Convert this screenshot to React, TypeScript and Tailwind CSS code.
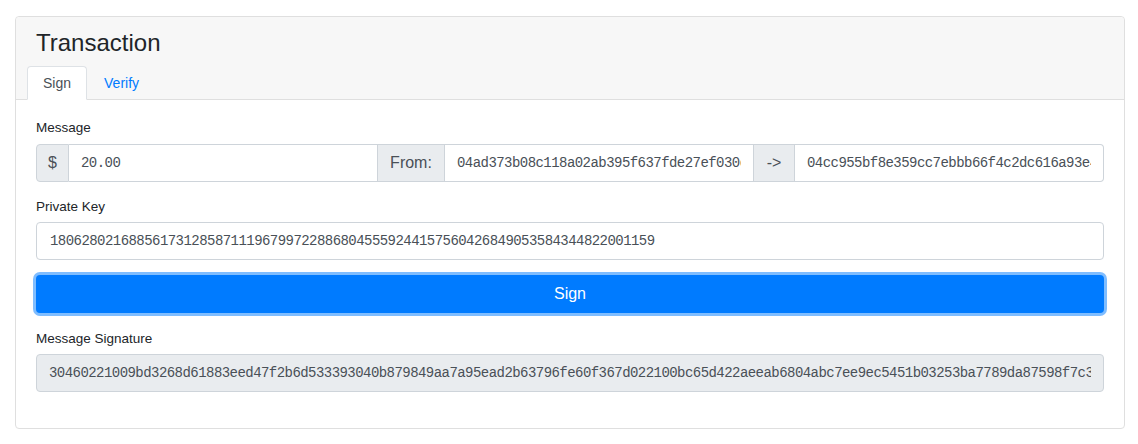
import { useState } from "react";

const fromKey =
  "04ad373b08c118a02ab395f637fde27ef030c9d5e1b7a4f26c83e0d95b1a47f2c6e803d9b5a1f47c2e6d8b30a95f1e7c4d2b86a03f95e1c7b4d28a6f03e9c51b7d";
const toKey =
  "04cc955bf8e359cc7ebbb66f4c2dc616a93e4b7d1a0c58f2e63b9d17a4c08e5f2b6d93a1c7e04f85b2d6a39c1e7f04b8d25a6c93e1f7b40d8a2c65e93b1f7a0d4";
const privateKey =
  "18062802168856173128587111967997228868045559244157560426849053584344822001159";
const signature =
  "30460221009bd3268d61883eed47f2b6d533393040b879849aa7a95ead2b63796fe60f367d022100bc65d422aeeab6804abc7ee9ec5451b03253ba7789da87598f7c3a1e9d04b2";

const mono = "font-['Liberation_Mono',monospace] text-[14px] tracking-[-0.55px] text-[#495057]";

export default function App() {
  const [tab, setTab] = useState<"sign" | "verify">("sign");
  const [amount, setAmount] = useState("20.00");

  return (
    <div className="min-h-[444px] bg-white pt-4 pl-[15px] pr-[13px] font-['Liberation_Sans',Arial,sans-serif] text-[#212529]">
      <div className="rounded-[4px] border border-[#dfdfdf]">
        {/* header */}
        <div className="rounded-t-[4px] border-b border-[#dfdfdf] bg-[#f7f7f7] pl-[11px]">
          <h3 className="mb-[9px] pl-[9px] pt-[11px] text-[24px] leading-[29px] font-normal">Transaction</h3>
          <div className="-mb-px flex text-[14px]">
            <button
              onClick={() => setTab("sign")}
              className={
                "h-[34px] rounded-t-[4px] border px-[15px] leading-[32px] " +
                (tab === "sign"
                  ? "border-[#dee2e6] border-b-white bg-white text-[#495057]"
                  : "border-transparent text-[#007bff]")
              }
            >
              Sign
            </button>
            <button
              onClick={() => setTab("verify")}
              className={
                "h-[34px] rounded-t-[4px] border px-[16px] leading-[32px] " +
                (tab === "verify"
                  ? "border-[#dee2e6] border-b-white bg-white text-[#495057]"
                  : "border-transparent text-[#007bff]")
              }
            >
              Verify
            </button>
          </div>
        </div>

        {/* body */}
        <div className="px-5 pt-[17px] pb-[36px]">
          <label className="mb-[6px] block text-[13.5px] leading-[21px]">Message</label>
          <div className="flex h-[38px] text-[16px]">
            <span className="flex w-[33px] items-center justify-center rounded-l-[4px] border border-[#ced4da] bg-[#e9ecef] text-[#495057]">
              $
            </span>
            <input
              value={amount}
              onChange={(e) => setAmount(e.target.value)}
              className={"min-w-0 flex-1 border border-l-0 border-[#ced4da] bg-white px-[12px] outline-none " + mono}
            />
            <span className="flex w-[67px] items-center justify-center border border-l-0 border-[#ced4da] bg-[#e9ecef] text-[#495057]">
              From:
            </span>
            <input
              readOnly
              value={fromKey}
              className={"min-w-0 flex-1 border border-l-0 border-[#ced4da] bg-white px-[12px] outline-none " + mono}
            />
            <span className="flex w-[41px] items-center justify-center border border-l-0 border-[#ced4da] bg-[#e9ecef] text-[#495057]">
              -&gt;
            </span>
            <input
              readOnly
              value={toKey}
              className={"min-w-0 flex-1 rounded-r-[4px] border border-l-0 border-[#ced4da] bg-white px-[12px] outline-none " + mono}
            />
          </div>

          <label className="mt-[14px] mb-[5px] block text-[13.5px] leading-[21px]">Private Key</label>
          <input
            readOnly
            value={privateKey}
            className={"block h-[38px] w-full rounded-[4px] border border-[#ced4da] bg-white px-[13px] outline-none " + mono}
          />

          <button className="mt-[15px] block h-[38px] w-full rounded-[4px] bg-[#007bff] text-[16px] text-white shadow-[0_0_0_3px_rgba(0,123,255,0.5)]">
            Sign
          </button>

          <label className="mt-[15px] mb-[5px] block text-[13.5px] leading-[21px]">Message Signature</label>
          <input
            readOnly
            value={signature}
            className={"block h-[38px] w-full rounded-[4px] border border-[#ced4da] bg-[#e9ecef] px-[12px] outline-none " + mono}
          />
        </div>
      </div>
    </div>
  );
}
